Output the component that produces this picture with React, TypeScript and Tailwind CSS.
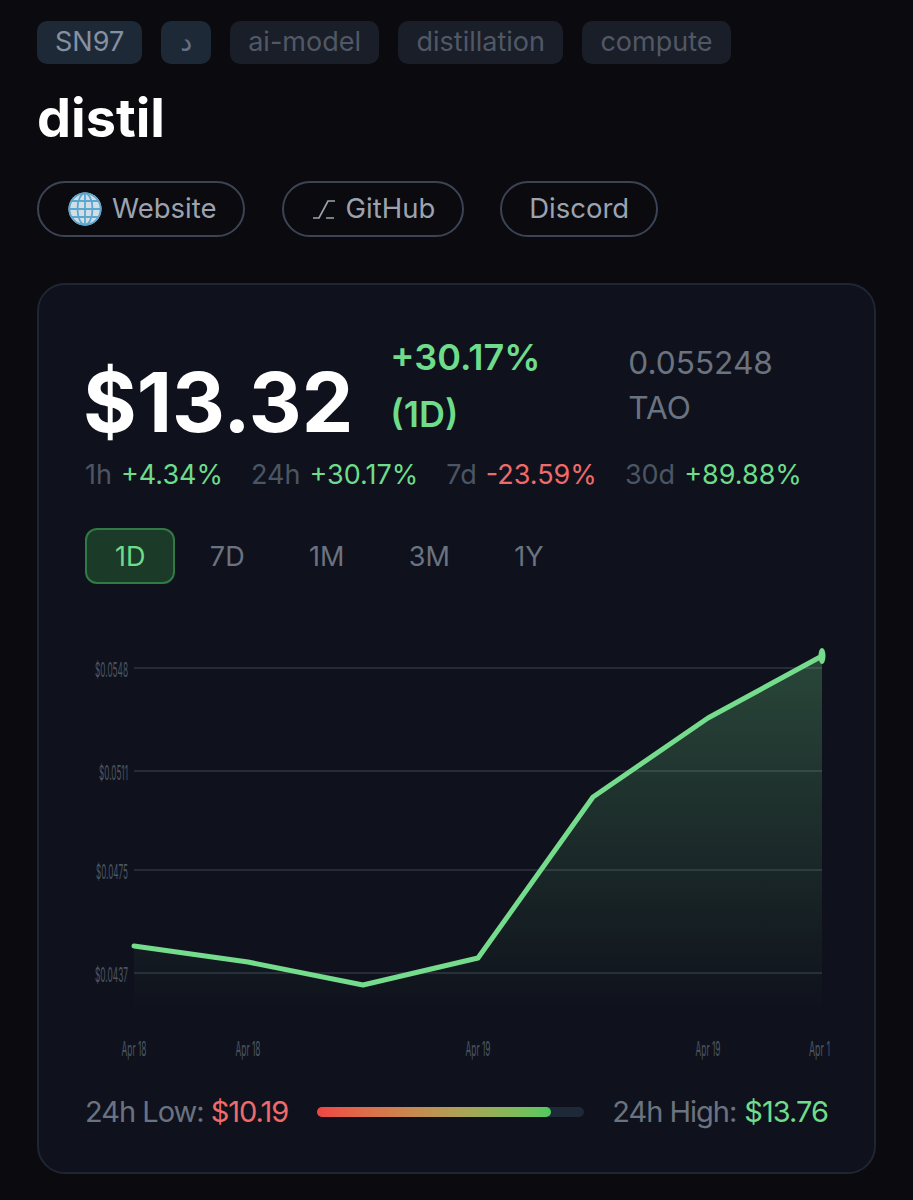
const font = "[font-family:Inter,'DejaVu_Sans',sans-serif]";

const tags = [
  { label: "SN97", style: "bg-[#1e2937] px-[18px] text-[#8590a2]" },
  { label: "د", style: "bg-[#1e2937] px-[19px] text-[#667084]" },
  { label: "ai-model", style: "bg-[#1a1e28] px-[18px] text-[#505866]" },
  { label: "distillation", style: "bg-[#1a1e28] px-[18.5px] text-[#505866]" },
  { label: "compute", style: "bg-[#1a1e28] px-[18px] text-[#505866]" },
];

const stats = [
  { label: "1h", value: "+4.34%", up: true },
  { label: "24h", value: "+30.17%", up: true },
  { label: "7d", value: "-23.59%", up: false },
  { label: "30d", value: "+89.88%", up: true },
];

const ranges = ["1D", "7D", "1M", "3M", "1Y"];

const gridLines = [
  { y: 668, label: "$0.0548", w: 33 },
  { y: 771, label: "$0.0511", w: 29 },
  { y: 870, label: "$0.0475", w: 32 },
  { y: 973, label: "$0.0437", w: 33 },
];

const dates = [
  { x: 134, label: "Apr 18", w: 25 },
  { x: 248, label: "Apr 18", w: 25 },
  { x: 478, label: "Apr 19", w: 25 },
  { x: 708, label: "Apr 19", w: 25 },
  { x: 819.5, label: "Apr 1", w: 21 },
];

const linePoints = "134,946 248,962 363,985 478,958 593,797 708,718 822,656";

function GlobeIcon() {
  return (
    <svg width="34" height="34" viewBox="0 0 34 34" fill="none">
      <circle cx="17" cy="17" r="16.5" fill="#d3dde6" />
      <g stroke="#5ba7cf" strokeWidth="1.8">
        <circle cx="17" cy="17" r="15.6" />
        <ellipse cx="17" cy="17" rx="7.5" ry="15.6" />
        <path d="M17 1.5v31M1.5 17h31M4 9h26M4 25h26" />
      </g>
    </svg>
  );
}

function BranchIcon() {
  return (
    <svg width="22" height="22" viewBox="0 0 22 22" fill="none" stroke="#9ca3af" strokeWidth="1.7">
      <path d="M0 20h6L15 3h7M13 20h8" />
    </svg>
  );
}

function Chart() {
  return (
    <svg width="760" height="430" viewBox="85 640 760 430" className="mt-[56px] block">
      <defs>
        <linearGradient id="area" x1="0" y1="0" x2="0" y2="1">
          <stop offset="0" stopColor="#74dc8c" stopOpacity="0.26" />
          <stop offset="1" stopColor="#74dc8c" stopOpacity="0" />
        </linearGradient>
      </defs>
      {gridLines.map((g) => (
        <g key={g.y}>
          <line x1="134" x2="822" y1={g.y} y2={g.y} stroke="#262b37" strokeWidth="2" />
          <text
            x="128"
            y={g.y + 9}
            textAnchor="end"
            textLength={g.w}
            lengthAdjust="spacingAndGlyphs"
            fontSize="20"
            fill="#4b5563"
            fontFamily="Inter, sans-serif"
          >
            {g.label}
          </text>
        </g>
      ))}
      <polygon points={`${linePoints} 822,1010 134,1010`} fill="url(#area)" />
      <polyline
        points={linePoints}
        fill="none"
        stroke="#74dc8c"
        strokeWidth="5"
        strokeLinejoin="round"
        strokeLinecap="round"
      />
      <ellipse cx="822" cy="656" rx="3.5" ry="8" fill="#74dc8c" />
      {dates.map((d, i) => (
        <text
          key={i}
          x={d.x}
          y="1056"
          textAnchor="middle"
          textLength={d.w}
          lengthAdjust="spacingAndGlyphs"
          fontSize="20"
          fill="#4b5563"
          fontFamily="Inter, sans-serif"
        >
          {d.label}
        </text>
      ))}
    </svg>
  );
}

export default function App() {
  return (
    <div className={`${font} h-[1200px] overflow-hidden bg-[#0a0a0f] px-[37px] pt-[21px]`}>
      <div className="flex gap-[19px]">
        {tags.map((t) => (
          <span
            key={t.label}
            className={`flex h-[43px] items-center rounded-[10px] text-[27px] ${t.style}`}
          >
            {t.label}
          </span>
        ))}
      </div>

      <h1 className="mt-[23px] text-[54px] leading-[62px] font-bold text-white">distil</h1>

      <div className="mt-[32px] flex gap-[37px] text-[27.5px] text-[#9ca3af]">
        <a className="flex h-[56px] items-center gap-[10px] rounded-full border-2 border-[#3b4455] pl-[29px] pr-[26px]">
          <GlobeIcon />
          Website
        </a>
        <a className="flex h-[56px] items-center gap-[11px] rounded-full border-2 border-[#3b4455] pl-[29px] pr-[27px]">
          <BranchIcon />
          GitHub
        </a>
        <a className="-ml-[1px] flex h-[56px] items-center rounded-full border-2 border-[#3b4455] px-[27px]">
          Discord
        </a>
      </div>

      <section className="mt-[46px] h-[891px] rounded-[28px] border-2 border-[#1e2533] bg-[#0f121c] px-[46px] pt-[51px]">
        <div className="flex items-start">
          <div className="-ml-[2px] mt-[17px] text-[82px] leading-[100px] font-bold text-white">$13.32</div>
          <div className="-mt-[2px] ml-[37px] w-[147px] text-[36px] leading-[47px] font-semibold text-[#6edc8a]">
            <div>+30.17%</div>
            <div className="mt-[10px]">(1D)</div>
          </div>
          <div className="ml-[91px] mt-[4px] text-[31.6px] leading-[45px] text-[#6b7280]">
            <div>0.055248</div>
            <div>TAO</div>
          </div>
        </div>

        <div className="mt-[4px] flex gap-[28px] text-[27px] leading-[36px]">
          {stats.map((s) => (
            <div key={s.label} className="flex gap-[9px]">
              <span className="text-[#4b5563]">{s.label}</span>
              <span className={s.up ? "text-[#6edc8a]" : "text-[#f06a6a]"}>{s.value}</span>
            </div>
          ))}
        </div>

        <div className="mt-[35px] flex gap-[4.4px]">
          {ranges.map((r, i) => (
            <button
              key={r}
              className={`h-[56px] rounded-[12px] border-2 px-[28px] pt-[2px] text-[27px] ${
                i === 0
                  ? "border-[#2f7a45] bg-[#1c3a28] text-[#6edc8a]"
                  : "border-transparent text-[#6b7280]"
              }`}
            >
              {r}
            </button>
          ))}
        </div>

        <Chart />

        <div className="mt-[24px] flex items-center whitespace-nowrap text-[29px] leading-[36px] tracking-[-1px]">
          <span className="text-[#6b7280]">24h Low:</span>
          <span className="ml-[7px] text-[#f06a6a]">$10.19</span>
          <div className="ml-[29px] h-[10px] w-[267px] shrink-0 rounded-full bg-[#1e2937]">
            <div className="h-full w-[234px] rounded-full bg-gradient-to-r from-[#ef4444] to-[#4fc95f]" />
          </div>
          <span className="ml-[28px] text-[#6b7280]">24h High:</span>
          <span className="ml-[8px] text-[#6edc8a]">$13.76</span>
        </div>
      </section>
    </div>
  );
}
